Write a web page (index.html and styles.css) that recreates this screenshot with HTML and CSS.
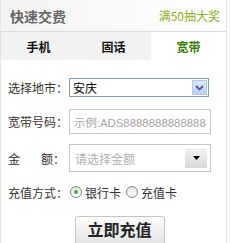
FILE: index.html
```html
<!DOCTYPE html>
<html lang="zh-CN">
<head>
  <meta charset="UTF-8">
  <title>快速交费</title>
  <link rel="stylesheet" href="styles.css">
</head>
<body>
  <div class="box">
    <div class="hd">
      <span class="title">快速交费</span>
      <a class="promo">满50抽大奖</a>
    </div>
    <div class="tabs">
      <div class="tab">手机</div>
      <div class="tab">固话</div>
      <div class="tab active">宽带</div>
    </div>
    <div class="form">
      <div class="row row-city">
        <label class="lbl">选择地市：</label>
        <div class="select city">
          <span class="val">安庆</span>
          <span class="arrow-blue">
            <svg width="9" height="6" viewBox="0 0 9 6"><path d="M1 1 L4.5 4.5 L8 1" fill="none" stroke="#4d6185" stroke-width="1.8"/></svg>
          </span>
        </div>
      </div>
      <div class="row row-acct">
        <label class="lbl">宽带号码：</label>
        <div class="input">示例:ADS8888888888888</div>
      </div>
      <div class="row row-amount">
        <label class="lbl split"><span>金</span><span>额：</span></label>
        <div class="select amount">
          <span class="ph">请选择金额</span>
          <span class="arrow-gray">
            <svg width="7" height="4" viewBox="0 0 7 4"><path d="M0 0 H7 L3.5 4 Z" fill="#000"/></svg>
          </span>
        </div>
      </div>
      <div class="row row-pay">
        <label class="lbl">充值方式：</label>
        <span class="radio on"></span><span class="opt">银行卡</span>
        <span class="radio"></span><span class="opt">充值卡</span>
      </div>
      <div class="actions">
        <button class="btn">立即充值</button>
      </div>
    </div>
  </div>
</body>
</html>
```

FILE: styles.css
```css
body {
  margin: 0;
  background: #fff;
  font-family: "Noto Sans CJK SC", "Liberation Sans", sans-serif;
  font-size: 12px;
  color: #333;
}

.box {
  width: 225px;
  height: 243px;
  overflow: hidden;
  border-left: 1px solid #e3e3e3;
  border-right: 1px solid #e3e3e3;
}

/* Header */
.hd {
  height: 31px;
  border-bottom: 1px solid #dcdcdc;
  display: flex;
  justify-content: space-between;
  align-items: center;
  padding: 0 6px 0 9px;
  background: linear-gradient(90deg, #f3f3f3, #fff);
}

.title {
  font-size: 14px;
  font-weight: bold;
  color: #666;
}

.promo {
  font-size: 12px;
  color: #8cb22a;
}

/* Tabs */
.tabs {
  display: flex;
  height: 28px;
}

.tab {
  flex: 1;
  display: flex;
  align-items: center;
  justify-content: center;
  background: #f2f2f2;
  font-weight: bold;
  color: #111;
}

.tab.active {
  background: #fff;
  color: #3b7c05;
}

/* Form */
.form {
  padding: 18px 0 0 7px;
}

.row {
  display: flex;
  align-items: center;
}

.lbl {
  width: 61px;
  flex: none;
  color: #333;
}

.lbl.split {
  display: flex;
  justify-content: space-between;
  padding-right: 4px;
  width: 57px;
}

.row-city { height: 19px; }
.row-acct { height: 25px; margin-top: 12px; }
.row-amount { height: 28px; margin-top: 10px; }
.row-pay { height: 14px; margin-top: 13px; }

.select, .input {
  box-sizing: border-box;
  height: 100%;
  display: flex;
  align-items: center;
}

.city {
  width: 140px;
  border: 1px solid #7f9db9;
  padding: 1px 1px 1px 3px;
  justify-content: space-between;
}

.city .val {
  color: #000;
  font-size: 12px;
}

.arrow-blue {
  width: 15px;
  height: 15px;
  display: flex;
  align-items: center;
  justify-content: center;
  background: linear-gradient(#dbe6fb, #b8cdf6);
  border: 1px solid #b4c8f0;
  box-sizing: border-box;
}

.input {
  width: 142px;
  border: 1px solid #c6c6c6;
  padding-left: 4px;
  color: #a5a5a5;
  font-family: "Liberation Sans", "Noto Sans CJK SC", sans-serif;
  font-size: 11.4px;
  white-space: nowrap;
  overflow: hidden;
}

.amount {
  width: 142px;
  border: 1px solid #c6c6c6;
  padding: 3px 3px 3px 5px;
  justify-content: space-between;
}

.amount .ph {
  color: #b0b0b0;
}

.arrow-gray {
  width: 22px;
  height: 100%;
  display: flex;
  align-items: center;
  justify-content: center;
  background: linear-gradient(#f4f4f4, #d6d6d6);
}

.radio {
  width: 12px;
  height: 12px;
  box-sizing: border-box;
  border: 1px solid #7b8593;
  border-radius: 50%;
  background: linear-gradient(#e4e4e4, #fff);
  margin: 0 3px 0 1px;
  display: flex;
  align-items: center;
  justify-content: center;
}

.radio.on::after {
  content: "";
  width: 4px;
  height: 4px;
  border-radius: 50%;
  background: #3fae32;
}

.opt {
  margin-right: 4px;
}

/* Button */
.actions {
  display: flex;
  justify-content: center;
  padding-left: 5px;
  margin-top: 17px;
}

.btn {
  width: 90px;
  height: 30px;
  border: 1px solid #c4c4c4;
  border-radius: 3px;
  background: linear-gradient(#fdfdfd, #e3e3e3);
  font-family: "Noto Sans CJK SC", sans-serif;
  font-size: 16px;
  font-weight: bold;
  color: #222;
  padding: 0 0 4px;
}
```
